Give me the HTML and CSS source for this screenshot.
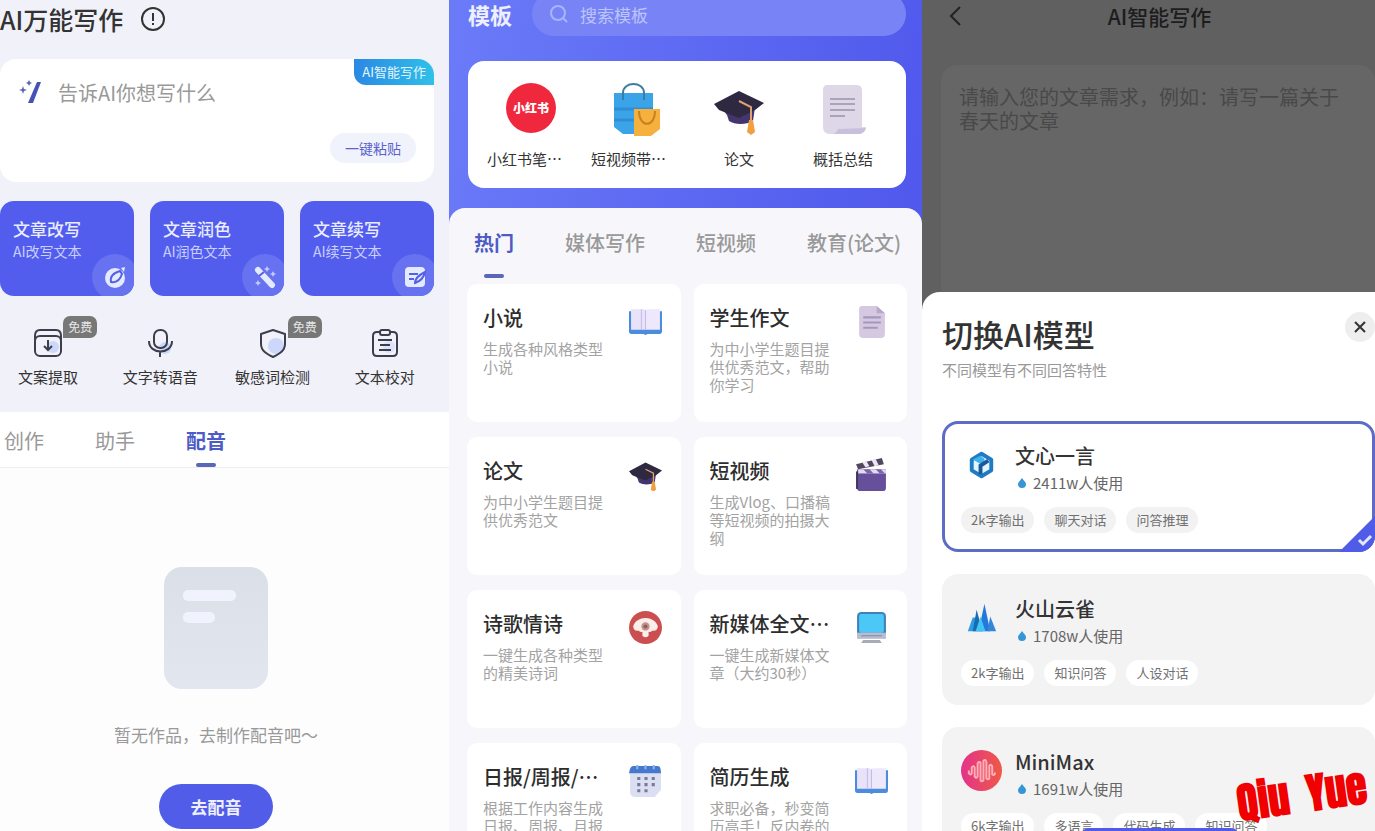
FILE: index.html
```html
<!DOCTYPE html>
<html lang="zh-CN">
<head>
    <meta charset="UTF-8">
    <meta name="viewport" content="width=device-width, initial-scale=1.0">
    <title>AI万能写作</title>
    <link rel="stylesheet" href="styles.css">
</head>
<body>
    <!-- shared icons -->
    <svg class="sprite" aria-hidden="true">
        <symbol id="icon-cap" viewBox="0 0 50 50">
            <path d="M6 22l7 9 2 6c6 4 17 4 24 0l2-14z" fill="#44356f"/>
            <path d="M0 20 25 7l25 12-9 7-16 8-20-8z" fill="#2e2940"/>
            <path d="M25 17l12 6v14" fill="none" stroke="#e0a070" stroke-width="2"/>
            <path d="M35 36h4l2 12-4 3-4-3z" fill="#f0a040"/>
        </symbol>
        <symbol id="icon-book" viewBox="0 0 32 32">
            <path d="M0 6h32v20q0 2-2 2H18l-2 1-2-1H2q-2 0-2-2z" fill="#4c8cdc"/>
            <path d="M2 4h12q2 0 2 2v18H2z" fill="#e9e3fa"/>
            <path d="M30 4H18q-2 0-2 2v18h14z" fill="#eee8fd"/>
            <path d="M12 4v20M16 5v19" stroke="#c3bbe6"/>
        </symbol>
        <symbol id="icon-drop" viewBox="0 0 10 12">
            <path d="M5 1c2 3 4 4 4 6a4 4 0 0 1-8 0C1 5 3 4 5 1z" fill="#3496d4"/>
        </symbol>
    </svg>

    <main class="screens">
        <!-- home -->
        <section class="screen home">
            <header class="home-header">
                <h1>AI万能写作</h1>
                <svg width="26" height="26" viewBox="0 0 26 26" fill="none" stroke="#333" stroke-width="2"><circle cx="13" cy="13" r="11"/><path d="M13 7v8M13 17v2"/></svg>
            </header>

            <div class="prompt">
                <svg class="wand" width="24" height="26" viewBox="0 0 24 26">
                    <path d="M19 3h4l-8 21h-5z" fill="#4453b8"/>
                    <path d="M5 7l1 3 3 1-3 1-1 3-1-3-3-1 3-1zM11 1l1 2 2 1-2 1-1 2-1-2-2-1 2-1z" fill="#5a65ae"/>
                </svg>
                <textarea aria-label="写作内容" placeholder="告诉AI你想写什么"></textarea>
                <span class="prompt-badge">AI智能写作</span>
                <button class="paste">一键粘贴</button>
            </div>

            <div class="actions">
                <a class="action" href="#">
                    <strong>文章改写</strong>
                    <span>AI改写文本</span>
                    <i class="action-icon"><svg width="24" height="24" viewBox="0 0 24 24"><circle cx="12" cy="13" r="10" fill="#e4eaff"/><path d="M8 17c-1-5 2-9 9-11l2 3c-2 6-6 9-11 8z" fill="#e4eaff" stroke="#5560e8" stroke-width="2"/><path d="M18 3l4-1-1 5z" fill="#e4eaff"/></svg></i>
                </a>
                <a class="action" href="#">
                    <strong>文章润色</strong>
                    <span>AI润色文本</span>
                    <i class="action-icon"><svg width="24" height="24" viewBox="0 0 24 24"><path d="M5 5l14 15" stroke="#e4eaff" stroke-width="6" stroke-linecap="round"/><path d="M6 11l5-4" stroke="#5560e8" stroke-width="2"/><path d="M14 1l1 2 2 1-2 1-1 2-1-2-2-1 2-1zM20 6l1 2 2 1-2 1-1 2-1-2-2-1 2-1zM5 15l1 2 2 1-2 1-1 2-1-2-2-1 2-1z" fill="#c4ccff"/></svg></i>
                </a>
                <a class="action" href="#">
                    <strong>文章续写</strong>
                    <span>AI续写文本</span>
                    <i class="action-icon"><svg width="24" height="24" viewBox="0 0 24 24"><rect x="2" y="2" width="20" height="20" rx="4" fill="#e4eaff"/><path d="M6 9h9M6 14h5M12 18c0-4 4-8 10-11-1 5-4 9-10 11z" fill="#e4eaff" stroke="#5560e8" stroke-width="2"/></svg></i>
                </a>
            </div>

            <nav class="tools">
                <a class="tool" href="#">
                    <svg width="30" height="30" viewBox="0 0 30 30" fill="none" stroke="#3c3e4c" stroke-width="2"><circle cx="20" cy="19" r="6" fill="#cbd8fb" stroke="none"/><rect x="2" y="8" width="26" height="20" rx="5"/><path d="M2 12V8q0-6 5-6h16q5 0 5 6v4M15 12v10M11 18l4 4 4-4"/></svg>
                    <span>文案提取</span>
                    <em class="free">免费</em>
                </a>
                <a class="tool" href="#">
                    <svg width="30" height="30" viewBox="0 0 30 30" fill="none" stroke="#3c3e4c" stroke-width="2"><circle cx="20" cy="20" r="6" fill="#cbd8fb" stroke="none"/><rect x="9" y="2" width="13" height="18" rx="6"/><path d="M4 13c0 14 23 14 23 0M15 24v5"/></svg>
                    <span>文字转语音</span>
                </a>
                <a class="tool" href="#">
                    <svg width="30" height="30" viewBox="0 0 30 30" fill="none" stroke="#3c3e4c" stroke-width="2"><circle cx="18" cy="18" r="8" fill="#cbd8fb" stroke="none"/><path d="M15 2l12 4v10c0 7-6 10-12 13C9 26 3 23 3 16V6z" stroke-linejoin="round"/></svg>
                    <span>敏感词检测</span>
                    <em class="free">免费</em>
                </a>
                <a class="tool" href="#">
                    <svg width="30" height="30" viewBox="0 0 30 30" fill="none" stroke="#3c3e4c" stroke-width="2"><circle cx="19" cy="19" r="6" fill="#dde3fb" stroke="none"/><path d="M10 4H7q-4 0-4 4v16q0 4 4 4h16q4 0 4-4V8q0-4-4-4h-3M8 12h14M10 17h10M9 22h12"/><rect x="10" y="2" width="10" height="5" rx="2"/></svg>
                    <span>文本校对</span>
                </a>
            </nav>

            <div class="works">
                <div class="tabs works-tabs">
                    <button>创作</button>
                    <button>助手</button>
                    <button class="active">配音</button>
                </div>
                <div class="empty">
                    <div class="empty-icon"><i></i><i></i></div>
                    <p>暂无作品&#65292;去制作配音吧～</p>
                    <button class="go">去配音</button>
                </div>
            </div>
        </section>

        <!-- templates -->
        <section class="screen templates">
            <header class="templates-header">
                <h2>模板</h2>
                <label class="search">
                    <svg width="18" height="18" viewBox="0 0 18 18" fill="none" stroke="#a9b4ff" stroke-width="2"><circle cx="8" cy="8" r="7"/><path d="M13 13l4 4"/></svg>
                    <input type="text" aria-label="搜索模板" placeholder="搜索模板">
                </label>
            </header>

            <div class="quick">
                <a href="#">
                    <span class="red-logo">小红书</span>
                    <span class="long">小红书笔…</span>
                </a>
                <a href="#">
                    <svg width="50" height="54" viewBox="0 0 50 54"><path d="M4 11h39v41H13l-9-7z" fill="#3ba4e8"/><path d="M4 27h39M4 38h39" stroke="#318ed6" stroke-width="3"/><path d="M13 18V11c0-12 21-12 21 0v7" fill="none" stroke="#3c7da8" stroke-width="2"/><path d="M24 27h26v20l-9 7H24z" fill="#f6b03e"/><path d="M29 29c0 17 16 17 16 0" fill="none" stroke="#c98220" stroke-width="2"/></svg>
                    <span class="long">短视频带…</span>
                </a>
                <a href="#">
                    <svg width="50" height="54"><use href="#icon-cap"/></svg>
                    <span>论文</span>
                </a>
                <a href="#">
                    <svg width="50" height="54" viewBox="0 0 50 54"><path d="M10 3h29q5 0 5 6v36h4q-1 7-8 7H12q-7 0-7-7V8q0-5 5-5z" fill="#ddd7e8"/><path d="M20 47q-1 4-5 5h25q6 0 8-6z" fill="#c8bfdd"/><path d="M12 17h25M12 22h25M12 28h25M12 34h15" stroke="#aaa3ba" stroke-width="2"/></svg>
                    <span>概括总结</span>
                </a>
            </div>

            <div class="sheet">
                <div class="tabs template-tabs">
                    <button class="active">热门</button>
                    <button>媒体写作</button>
                    <button>短视频</button>
                    <button>教育(论文)</button>
                </div>
                <div class="cards">
                    <a class="card" href="#">
                        <h3>小说</h3>
                        <p>生成各种风格类型小说</p>
                        <svg class="card-icon"><use href="#icon-book"/></svg>
                    </a>
                    <a class="card" href="#">
                        <h3>学生作文</h3>
                        <p>为中小学生题目提供优秀范文&#65292;帮助你学习</p>
                        <svg class="card-icon" viewBox="0 0 32 32"><path d="M7 1h14l8 7v20q0 4-4 4H8q-4 0-4-4V4q0-3 3-3z" fill="#d5c9e2"/><path d="M21 1v7h8z" fill="#b5a8ca"/><path d="M8 12h17M8 17h17M8 22h14" stroke="#a596bb" stroke-width="2"/></svg>
                    </a>
                    <a class="card" href="#">
                        <h3>论文</h3>
                        <p>为中小学生题目提供优秀范文</p>
                        <svg class="card-icon"><use href="#icon-cap"/></svg>
                    </a>
                    <a class="card" href="#">
                        <h3>短视频</h3>
                        <p>生成Vlog、口播稿等短视频的拍摄大纲</p>
                        <svg class="card-icon" viewBox="0 0 32 32"><path d="M2 11h28v18q0 3-3 3H5q-3 0-3-3z" fill="#66509c"/><path d="M1 6 26 0l2 6L3 11z" fill="#51485d"/><path d="M7 4l4-1 3 5-4 1zM16 2l4-1 3 6-4 1z" fill="#eee3f8"/><path d="M3 11h27v4H3z" fill="#e6daf2"/><path d="M8 11l4 4h6l-4-4zM20 11l4 4h5l-4-4z" fill="#7b65aa"/><path d="M2 13v17" stroke="#41365c" stroke-width="2"/></svg>
                    </a>
                    <a class="card" href="#">
                        <h3>诗歌情诗</h3>
                        <p>一键生成各种类型的精美诗词</p>
                        <svg class="card-icon" viewBox="0 0 32 32"><circle cx="16" cy="16" r="16" fill="#cb4f50"/><path d="M4 15C7 4 25 4 28 15q-1 5-5 4-2 2-4 1v4q-3 3-6 0v-4q-2 1-4-1-4 1-5-4z" fill="#f9eeea"/><circle cx="16" cy="15" r="4" fill="#cf8d85"/><circle cx="16" cy="15" r="2" fill="#7b6868"/></svg>
                    </a>
                    <a class="card" href="#">
                        <h3>新媒体全文…</h3>
                        <p>一键生成新媒体文章&#65288;大约30秒&#65289;</p>
                        <svg class="card-icon" viewBox="0 0 32 32"><rect x="2" y="1" width="28" height="24" rx="4" fill="#3f82b8"/><rect x="4" y="3" width="24" height="18" rx="2" fill="#4cc8f7"/><path d="M2 21h28v6H2z" fill="#b8bccf"/><path d="M8 28h16l2 3H6z" fill="#a9aab8"/><path d="M6 24h20" stroke="#858ba8"/></svg>
                    </a>
                    <a class="card" href="#">
                        <h3>日报/周报/…</h3>
                        <p>根据工作内容生成日报、周报、月报</p>
                        <svg class="card-icon" viewBox="0 0 32 32"><path d="M1 7h30v18l-6 7H6q-5 0-5-5z" fill="#dcdff1"/><path d="M4 2h24q3 0 3 7H0q1-7 4-7z" fill="#4678cd"/><path d="M8 1v4M16 1v4M24 1v4" stroke="#88b6ee" stroke-width="2"/><path d="M8 14h18M8 20h18M8 26h12" stroke="#777b9b" stroke-width="3" stroke-dasharray="3 4"/></svg>
                    </a>
                    <a class="card" href="#">
                        <h3>简历生成</h3>
                        <p>求职必备&#65292;秒变简历高手&#65281;反内卷的</p>
                        <svg class="card-icon"><use href="#icon-book"/></svg>
                    </a>
                </div>
            </div>
        </section>

        <!-- model picker -->
        <section class="screen writer">
            <header class="writer-header">
                <button class="back" aria-label="返回"><svg width="14" height="22" viewBox="0 0 14 22" fill="none" stroke="#222" stroke-width="2"><path d="M12 2 3 11l9 9"/></svg></button>
                <h2>AI智能写作</h2>
            </header>
            <textarea class="request" aria-label="文章需求" placeholder="请输入您的文章需求&#65292;例如&#65306;请写一篇关于春天的文章"></textarea>

            <div class="picker">
                <div class="picker-header">
                    <h2>切换AI模型</h2>
                    <button class="close" aria-label="关闭"><svg width="12" height="12" viewBox="0 0 12 12" stroke="#333" stroke-width="2"><path d="M1 1l10 10M11 1 1 11"/></svg></button>
                </div>
                <p class="picker-hint">不同模型有不同回答特性</p>

                <label class="model selected">
                    <input type="radio" name="model" checked>
                    <span class="model-main">
                        <svg class="model-logo" viewBox="0 0 42 42"><path d="M21 10l10 6v11l-10 6-10-6V16z" fill="#e2f5ff" stroke="#1f7cc4" stroke-width="4" stroke-linejoin="round"/><path d="M12 16l9 5 3-2v-4l-4-3z" fill="#3fb2ee"/><path d="M20 31v-9l8-5" fill="none" stroke="#185a9c" stroke-width="4"/></svg>
                        <span class="model-info">
                            <b>文心一言</b>
                            <span class="usage"><svg width="10" height="12"><use href="#icon-drop"/></svg>2411w人使用</span>
                        </span>
                    </span>
                    <span class="tags"><i>2k字输出</i><i>聊天对话</i><i>问答推理</i></span>
                    <svg class="check" width="36" height="36" viewBox="0 0 36 36"><path d="M36 0v36H0z" fill="#505ce8"/><path d="M20 24l4 4 8-8" fill="none" stroke="#e3e8ff" stroke-width="3"/></svg>
                </label>
                <label class="model">
                    <input type="radio" name="model">
                    <span class="model-main">
                        <svg class="model-logo" viewBox="0 0 42 42"><path d="M7 35l5-14h3l2 14z" fill="#2d9be8"/><path d="M12 35l4-22 6 22z" fill="#176cae"/><path d="M18 35l6-28 6 28z" fill="#2378da"/><path d="M27 35l3-15 6 15z" fill="#3386d8"/><path d="M15 35l5-15 5 15z" fill="#41c5f4"/></svg>
                        <span class="model-info">
                            <b>火山云雀</b>
                            <span class="usage"><svg width="10" height="12"><use href="#icon-drop"/></svg>1708w人使用</span>
                        </span>
                    </span>
                    <span class="tags"><i>2k字输出</i><i>知识问答</i><i>人设对话</i></span>
                </label>
                <label class="model">
                    <input type="radio" name="model">
                    <span class="model-main">
                        <svg class="model-logo" viewBox="0 0 42 42"><defs><linearGradient id="mm"><stop stop-color="#e3338b"/><stop offset="1" stop-color="#ef5947"/></linearGradient></defs><circle cx="21" cy="21" r="21" fill="url(#mm)"/><path d="M8 21v3q2 2 3 0v-6q2-3 3 0v9q2 3 3 0V14q1-3 3-1v18q1 2 3 0V11q2-2 3 1v17q2 2 3 0V16q2-2 3 1v8q2 2 3-2" fill="none" stroke="#ffb0b6" stroke-width="2"/></svg>
                        <span class="model-info">
                            <b>MiniMax</b>
                            <span class="usage"><svg width="10" height="12"><use href="#icon-drop"/></svg>1691w人使用</span>
                        </span>
                    </span>
                    <span class="tags"><i>6k字输出</i><i>多语言</i><i>代码生成</i><i>知识问答</i></span>
                </label>
            </div>
            <button class="confirm" aria-label="确定"></button>
            <div class="signature"><span>Qiu</span><span>Yue</span></div>
        </section>
    </main>
</body>
</html>
```
FILE: styles.css
```css
* {
    box-sizing: border-box;
}

body {
    margin: 0;
    font-family: "Noto Sans CJK SC", "Noto Sans", sans-serif;
    color: #333;
}

h1, h2, h3, p {
    margin: 0;
    font-weight: 500;
}

a {
    color: inherit;
    text-decoration: none;
}

i, em {
    font-style: normal;
}

button, input, textarea {
    font-family: inherit;
    border: none;
    padding: 0;
    outline: none;
}

button {
    cursor: pointer;
}

svg {
    display: block;
    flex-shrink: 0;
}

.sprite {
    position: absolute;
    width: 0;
    height: 0;
}

.screens {
    display: grid;
    grid-template-columns: 449fr 473fr 453fr;
    height: 100vh;
    overflow: hidden;
}

.screen {
    position: relative;
    min-width: 0;
    overflow: hidden;
}

/* tabs */
.tabs {
    display: flex;
    gap: 51px;
}

.tabs button {
    position: relative;
    background: none;
    font-size: 20px;
    line-height: 30px;
    color: #999;
    white-space: nowrap;
}

.tabs .active {
    color: #4d5bc6;
    font-weight: 700;
}

.tabs .active::after {
    content: "";
    position: absolute;
    left: 50%;
    bottom: 0;
    width: 20px;
    height: 4px;
    margin-left: -10px;
    border-radius: 2px;
    background: #5a66b8;
}

/* home */
.home {
    display: flex;
    flex-direction: column;
    background: #f1f1f9;
}

.home-header {
    display: flex;
    align-items: center;
    gap: 17px;
    height: 37px;
    margin-bottom: 22px;
}

.home-header h1 {
    font-size: 25px;
    line-height: 36px;
}

.prompt {
    position: relative;
    display: flex;
    height: 123px;
    margin-right: 15px;
    padding: 20px 18px;
    gap: 16px;
    border-radius: 16px;
    background: #fff;
}

.prompt textarea {
    flex: 1;
    resize: none;
    font-size: 20px;
    line-height: 28px;
    background: none;
}

.prompt textarea::placeholder {
    color: #999;
}

.prompt-badge {
    position: absolute;
    top: 0;
    right: 0;
    padding: 0 8px;
    font-size: 13px;
    line-height: 26px;
    color: #e2f6ff;
    border-radius: 0 16px 0 12px;
    background: linear-gradient(90deg, #2b88e4, #2fc0e8);
}

.paste {
    position: absolute;
    right: 18px;
    bottom: 19px;
    width: 86px;
    height: 30px;
    border-radius: 15px;
    font-size: 14px;
    color: #5a63cc;
    background: #f0f2fc;
}

.actions {
    display: grid;
    grid-template-columns: repeat(3, 1fr);
    gap: 16px;
    margin: 19px 15px 0 0;
}

.action {
    position: relative;
    display: flex;
    flex-direction: column;
    height: 95px;
    padding: 16px 13px;
    overflow: hidden;
    border-radius: 14px;
    color: #e9edff;
    background: #525ded;
}

.action strong {
    font-size: 17px;
    line-height: 24px;
    font-weight: 500;
}

.action span {
    font-size: 14px;
    line-height: 20px;
    color: #c9d0ff;
}

.action-icon {
    position: absolute;
    right: -4px;
    bottom: -4px;
    display: flex;
    align-items: center;
    justify-content: center;
    width: 46px;
    height: 46px;
    border-radius: 50%;
    background: #6772f0;
}

.tools {
    display: grid;
    grid-template-columns: repeat(4, 1fr);
    margin: 32px 8px 24px -8px;
}

.tool {
    position: relative;
    display: flex;
    flex-direction: column;
    align-items: center;
    gap: 8px;
    font-size: 15px;
    line-height: 22px;
}

.free {
    position: absolute;
    top: -12px;
    left: 50%;
    margin-left: 15px;
    padding: 0 5px;
    font-size: 12px;
    line-height: 22px;
    color: #e6e6e6;
    border-radius: 7px 7px 7px 0;
    background: #777;
}

.works {
    flex: 1;
    background: #fdfdfe;
}

.works-tabs {
    height: 56px;
    padding: 0 4px;
    background: #fff;
    border-bottom: 1px solid #eee;
}

.works-tabs button {
    padding: 14px 0 12px;
}

.empty {
    display: flex;
    flex-direction: column;
    align-items: center;
    padding: 99px 17px 0 0;
}

.empty-icon {
    display: flex;
    flex-direction: column;
    gap: 11px;
    width: 104px;
    height: 122px;
    padding: 23px 19px;
    border-radius: 18px;
    background: linear-gradient(#dadfe8, #e2e6ef);
}

.empty-icon i {
    width: 53px;
    height: 11px;
    border-radius: 5px;
    background: #f0f3fd;
}

.empty-icon i + i {
    width: 32px;
}

.empty p {
    margin: 34px 0 37px;
    font-size: 17px;
    line-height: 24px;
    font-weight: 400;
    color: #999;
}

.go {
    width: 114px;
    height: 45px;
    border-radius: 23px;
    font-size: 17px;
    font-weight: 700;
    color: #eef0ff;
    background: #515ce9;
}

/* templates */
.templates {
    display: flex;
    flex-direction: column;
    background: linear-gradient(100deg, #6b7bf8, #5059ec 80%);
}

.templates-header {
    display: flex;
    align-items: center;
    gap: 20px;
    height: 44px;
    margin: -8px 16px 25px 19px;
}

.templates-header h2 {
    font-size: 22px;
    font-weight: 700;
    color: #eef0ff;
}

.search {
    flex: 1;
    display: flex;
    align-items: center;
    gap: 12px;
    height: 44px;
    padding: 0 18px;
    border-radius: 22px;
    background: #7884f5;
}

.search input {
    flex: 1;
    min-width: 0;
    font-size: 17px;
    color: #fff;
    background: none;
}

.search input::placeholder {
    color: #bcc5fb;
}

.quick {
    display: grid;
    grid-template-columns: repeat(4, 1fr);
    margin: 0 16px 20px 19px;
    padding: 21px 11px 17px;
    border-radius: 16px;
    background: #fff;
}

.quick a {
    display: flex;
    flex-direction: column;
    align-items: center;
    justify-content: space-between;
    height: 89px;
    font-size: 15px;
    line-height: 24px;
}

.quick .long {
    width: 88px;
}

.quick .red-logo {
    width: 50px;
    height: 50px;
    margin-top: 1px;
    border-radius: 50%;
    font-size: 12px;
    line-height: 50px;
    font-weight: 900;
    text-align: center;
    color: #fff;
    background: #f0283e;
}

.sheet {
    flex: 1;
    padding: 20px 15px 0 18px;
    border-radius: 16px 16px 0 0;
    background: #f7f7fb;
}

.template-tabs {
    height: 50px;
    margin-bottom: 6px;
    padding: 0 7px;
}

.template-tabs button {
    font-weight: 500;
    padding-bottom: 20px;
}

.cards {
    display: grid;
    grid-template-columns: 1fr 1fr;
    gap: 15px 13px;
}

.card {
    position: relative;
    height: 138px;
    padding: 19px 16px;
    border-radius: 10px;
    background: #fff;
}

.card h3 {
    font-size: 20px;
    line-height: 30px;
    color: #2d2d2d;
}

.card p {
    width: 126px;
    margin-top: 7px;
    font-size: 15px;
    line-height: 18px;
    font-weight: 400;
    color: #a3a3a3;
}

.card-icon {
    position: absolute;
    top: 21px;
    right: 19px;
    width: 33px;
    height: 33px;
}

/* writer */
.writer {
    display: flex;
    flex-direction: column;
    background: #606060;
}

.writer-header {
    position: relative;
    height: 32px;
    margin-bottom: 33px;
    padding-left: 22px;
    text-align: center;
}

.writer-header h2 {
    font-size: 21px;
    line-height: 32px;
    color: #1d1d1d;
}

.back {
    position: absolute;
    top: 5px;
    left: 26px;
    background: none;
}

.request {
    flex-shrink: 0;
    height: 227px;
    margin-left: 19px;
    padding: 20px 18px;
    resize: none;
    border-radius: 16px 16px 0 0;
    font-size: 20px;
    line-height: 24px;
    background: #666;
}

.request::placeholder {
    color: #494949;
}

.picker {
    flex-shrink: 0;
    padding: 20px 0 0 20px;
    border-radius: 18px 0 0 0;
    background: #fff;
}

.picker-header {
    display: flex;
    justify-content: space-between;
    align-items: flex-start;
}

.picker-header h2 {
    font-size: 31px;
    line-height: 44px;
}

.close {
    display: flex;
    align-items: center;
    justify-content: center;
    width: 30px;
    height: 30px;
    border-radius: 50%;
    background: #eee;
}

.picker-hint {
    margin: 3px 0 40px;
    font-size: 15px;
    line-height: 22px;
    font-weight: 400;
    color: #999;
}

.model {
    position: relative;
    display: block;
    height: 131px;
    margin-bottom: 22px;
    padding: 20px 19px;
    overflow: hidden;
    border-radius: 16px;
    background: #f3f3f3;
}

.model.selected {
    background: #fff;
    box-shadow: inset 0 0 0 3px #5d6dc6;
}

.model input {
    position: absolute;
    opacity: 0;
}

.model-main {
    display: flex;
    gap: 13px;
    height: 54px;
}

.model-logo {
    width: 41px;
    height: 41px;
    margin-top: 3px;
}

.model-info b {
    display: block;
    font-size: 20px;
    line-height: 30px;
    font-weight: 500;
}

.usage {
    display: flex;
    align-items: center;
    gap: 6px;
    padding-left: 2px;
    font-size: 15px;
    line-height: 24px;
    color: #666;
}

.tags {
    display: flex;
    gap: 10px;
    margin-top: 12px;
}

.tags i {
    padding: 0 10px;
    font-size: 13px;
    line-height: 26px;
    color: #707070;
    white-space: nowrap;
    border-radius: 13px;
    background: #fff;
}

.selected .tags i {
    background: #f2f2f2;
}

.check {
    position: absolute;
    right: 0;
    bottom: 0;
}

/* lies over the bottom of the list */
.confirm {
    position: absolute;
    left: 35%;
    right: 30%;
    bottom: -41px;
    height: 44px;
    border-radius: 8px;
    background: #505ce8;
}

.signature {
    position: absolute;
    right: 8px;
    bottom: 12px;
    display: flex;
    gap: 18px;
    font-family: Impact, Anton, "Roboto Condensed", Roboto, sans-serif;
    font-size: 42px;
    line-height: 48px;
    font-weight: 900;
    color: #f00000;
    transform: rotate(-8deg);
}
```
